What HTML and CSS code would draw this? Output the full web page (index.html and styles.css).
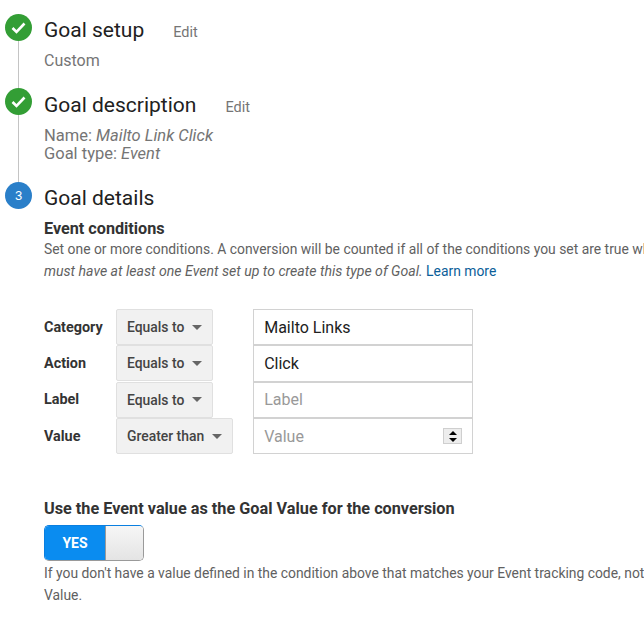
FILE: index.html
```html
<!DOCTYPE html>
<html lang="en">
<head>
<meta charset="utf-8">
<title>Goal details</title>
<link rel="stylesheet" href="styles.css">
</head>
<body>
<main class="page">
  <section class="step step-one">
    <div class="rail">
      <span class="badge done"><svg viewBox="0 0 27 27" width="27" height="27"><path d="M7.5 14l4 4 8-8.5" fill="none" stroke="#fff" stroke-width="2.6"/></svg></span>
      <span class="line"></span>
    </div>
    <div class="body">
      <div class="head"><h2>Goal setup</h2><a class="edit">Edit</a></div>
      <p class="summary">Custom</p>
    </div>
  </section>
  <section class="step step-two">
    <div class="rail">
      <span class="badge done"><svg viewBox="0 0 27 27" width="27" height="27"><path d="M7.5 14l4 4 8-8.5" fill="none" stroke="#fff" stroke-width="2.6"/></svg></span>
      <span class="line"></span>
    </div>
    <div class="body">
      <div class="head"><h2>Goal description</h2><a class="edit">Edit</a></div>
      <p class="summary tight">Name: <em>Mailto Link Click</em><br>Goal type: <em>Event</em></p>
    </div>
  </section>
  <section class="step step-three">
    <div class="rail">
      <span class="badge current">3</span>
    </div>
    <div class="body">
      <div class="head"><h2>Goal details</h2></div>
      <h3 class="sub">Event conditions</h3>
      <p class="note">Set one or more conditions. A conversion will be counted if all of the conditions you set are true when an Event is triggered. You<br><em>must have at least one Event set up to create this type of Goal.</em> <a class="link">Learn more</a></p>
      <div class="conditions">
        <label class="name">Category</label>
        <div class="select"><span>Equals to</span><i class="caret"></i></div>
        <div class="field">Mailto Links</div>
        <label class="name">Action</label>
        <div class="select"><span>Equals to</span><i class="caret"></i></div>
        <div class="field">Click</div>
        <label class="name">Label</label>
        <div class="select"><span>Equals to</span><i class="caret"></i></div>
        <div class="field empty">Label</div>
        <label class="name">Value</label>
        <div class="select"><span>Greater than</span><i class="caret"></i></div>
        <div class="field empty">Value<span class="spinner"><i class="up"></i><i class="down"></i></span></div>
      </div>
      <h3 class="use">Use the Event value as the Goal Value for the conversion</h3>
      <div class="toggle"><span class="yes">YES</span><span class="knob"></span></div>
      <p class="note help">If you don't have a value defined in the condition above that matches your Event tracking code, nothing will be recorded as the Goal<br>Value.</p>
    </div>
  </section>
</main>
</body>
</html>
```
FILE: styles.css
```css
html, body {
  margin: 0;
  padding: 0;
  background: #fff;
  overflow: hidden;
}
body {
  width: 644px;
  height: 630px;
  font-family: Roboto, "Liberation Sans", sans-serif;
  color: #212121;
}
.page {
  padding: 14px 0 0 5px;
}
.step {
  display: flex;
  white-space: nowrap;
}
.step-one { height: 74px; }
.step-two { height: 94px; }
.rail {
  width: 27px;
  margin-right: 12px;
  display: flex;
  flex-direction: column;
  align-items: center;
  flex: none;
}
.badge {
  width: 27px;
  height: 27px;
  border-radius: 50%;
  display: flex;
  align-items: center;
  justify-content: center;
  flex: none;
}
.done { background: #339e35; }
.current {
  background: #2a7fc9;
  color: #fff;
  font: 13px "Liberation Sans", sans-serif;
}
.line {
  width: 1px;
  flex: 1;
  background: #c4c4c4;
}
.body { min-width: 0; }
.head {
  display: flex;
  align-items: baseline;
  height: 30px;
  margin-top: 1px;
}
.step-two .head { margin-top: 2px; }
h2 {
  margin: 0;
  font-size: 21px;
  font-weight: 400;
  line-height: 30px;
  color: #212121;
}
.edit {
  margin-left: 29px;
  font-size: 14.5px;
  color: #757575;
}
.summary {
  margin: 7px 0 0;
  font-size: 16px;
  line-height: 18px;
  color: #757575;
}
.summary.tight {
  margin-top: 7px;
  font-size: 16.5px;
}
.sub {
  margin: 7px 0 0;
  font-size: 16.2px;
  line-height: 18px;
  font-weight: 700;
  color: #333;
}
.note {
  margin: 0;
  font-size: 13.88px;
  line-height: 22px;
  color: #616161;
}
.note em { font-size: 14.1px; }
.link { color: #0b5e99; }
.conditions {
  display: grid;
  grid-template-columns: 72px max-content 240px;
  grid-auto-rows: 36.33px;
  margin-top: 27px;
  align-items: center;
}
.name {
  font-size: 14.4px;
  font-weight: 700;
  color: #333;
}
.select {
  grid-column: 2;
  justify-self: start;
  box-sizing: border-box;
  height: 36px;
  display: flex;
  align-items: center;
  padding: 0 10px;
  gap: 8px;
  background: #f1f1f1;
  border: 1px solid #e0e0e0;
  border-radius: 2px;
  font-size: 13.9px;
  font-weight: 500;
  color: #444;
}
.caret {
  width: 0;
  height: 0;
  border: 5px solid transparent;
  border-top-color: #666;
  border-bottom: 0;
}
.field {
  grid-column: 3;
  margin-left: 20px;
  box-sizing: border-box;
  height: 36.33px;
  display: flex;
  align-items: center;
  justify-content: space-between;
  padding: 0 10px;
  border: 1px solid #d2d2d2;
  font-size: 16px;
  color: #212121;
}
.empty { color: #999; }
.spinner {
  width: 19px;
  height: 16px;
  display: flex;
  flex-direction: column;
  align-items: center;
  justify-content: space-around;
  background: linear-gradient(#ededed 0 47%, #bdbdbd 47% 53%, #ededed 53%);
  border: 1px solid #cfcfcf;
  box-sizing: border-box;
}
.up, .down {
  width: 0;
  height: 0;
  border-left: 4px solid transparent;
  border-right: 4px solid transparent;
}
.up { border-bottom: 4px solid #000; }
.down { border-top: 4px solid #000; }
.use {
  margin: 44.67px 0 0;
  font-size: 16.25px;
  line-height: 20px;
  font-weight: 700;
  color: #333;
}
.toggle {
  margin-top: 6px;
  width: 100px;
  height: 36px;
  box-sizing: border-box;
  display: flex;
  border-radius: 5px;
  overflow: hidden;
  border: 1px solid #9a9a9a;
  border-left-color: #0a7fe0;
  border-top-color: #0a7fe0;
}
.yes {
  width: 60px;
  background: #0a8cf0;
  color: #fff;
  font-size: 14px;
  font-weight: 700;
  display: flex;
  align-items: center;
  justify-content: center;
}
.knob {
  flex: 1;
  background: linear-gradient(#f6f6f6, #e4e4e4);
  border-left: 1px solid #9a9a9a;
}
.help {
  margin-top: 1px;
}
```
